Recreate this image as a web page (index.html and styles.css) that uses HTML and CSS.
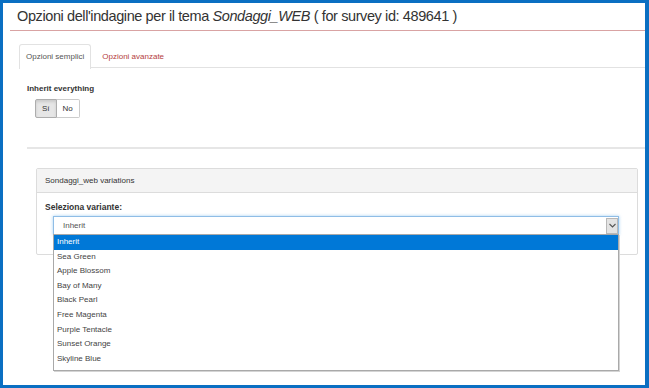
FILE: index.html
```html
<!DOCTYPE html>
<html lang="en">
<head>
    <meta charset="UTF-8">
    <title>Opzioni dell'indagine</title>
    <link rel="stylesheet" href="styles.css">
</head>
<body>
    <div class="frame">
        <div class="page-header">
            <h1>Opzioni dell'indagine per il tema <em>Sondaggi_WEB</em> ( for survey id: 489641 )</h1>
        </div>

        <div class="content">
            <ul class="nav-tabs">
                <li class="active"><a>Opzioni semplici</a></li>
                <li><a>Opzioni avanzate</a></li>
            </ul>

            <div class="inherit-group">
                <label class="control-label">Inherit everything</label>
                <div class="btn-group">
                    <span class="btn active">Sí</span>
                    <span class="btn">No</span>
                </div>
            </div>

            <hr class="divider">

            <div class="panel">
                <div class="panel-heading">Sondaggi_web variations</div>
                <div class="panel-body">
                    <label class="control-label">Seleziona variante:</label>
                    <div class="select-wrap">
                        <div class="select-box">
                            <span class="select-value">Inherit</span>
                            <span class="select-arrow">
                                <svg width="7" height="5" viewBox="0 0 7 5"><path d="M0.5 1 L3.5 4 L6.5 1" fill="none" stroke="#555" stroke-width="1.1"/></svg>
                            </span>
                        </div>
                        <ul class="select-list">
                            <li class="selected">Inherit</li>
                            <li>Sea Green</li>
                            <li>Apple Blossom</li>
                            <li>Bay of Many</li>
                            <li>Black Pearl</li>
                            <li>Free Magenta</li>
                            <li>Purple Tentacle</li>
                            <li>Sunset Orange</li>
                            <li>Skyline Blue</li>
                        </ul>
                    </div>
                </div>
            </div>
        </div>
    </div>
</body>
</html>
```

FILE: styles.css
```css
body {
    margin: 0;
    padding: 0;
    background: #ffffff;
    font-family: "Liberation Sans", Arial, sans-serif;
    color: #333;
}
.frame {
    width: 649px;
    height: 388px;
    box-sizing: border-box;
    border: 3px solid #0a6fc2;
    border-right-width: 4px;
    background: #fff;
    overflow: hidden;
}
.page-header {
    margin-left: 7px;
    height: 27px;
    border-bottom: 1px solid #d9a3a3;
}
.page-header h1 {
    margin: 0;
    padding: 4px 0 0 7px;
    font-size: 14.5px;
    letter-spacing: -0.4px;
    font-weight: normal;
    line-height: 18px;
    color: #333;
    white-space: nowrap;
}
.content {
    padding: 13px 0 0 16px;
}
.nav-tabs {
    list-style: none;
    margin: 0;
    padding: 0;
    display: flex;
    border-bottom: 1px solid #e2e2e2;
    height: 23px;
}
.nav-tabs li {
    margin-right: 4px;
}
.nav-tabs a {
    display: block;
    height: 23px;
    line-height: 23px;
    padding: 0 6px;
    font-size: 8px;
    color: #b5403e;
    border: 1px solid transparent;
    border-bottom: none;
    border-radius: 3px 3px 0 0;
}
.nav-tabs .active a {
    color: #555;
    background: #fff;
    border-color: #e2e2e2;
    height: 24px;
}
.control-label {
    display: block;
    font-size: 8px;
    font-weight: bold;
    color: #333;
}
.inherit-group {
    padding: 16px 0 0 8px;
}
.btn-group {
    display: flex;
    margin: 6px 0 0 8px;
}
.btn {
    display: block;
    height: 17px;
    line-height: 17px;
    font-size: 8px;
    color: #333;
    border: 1px solid #ccc;
    background: #fff;
    padding: 0 6px;
}
.btn:first-child {
    border-radius: 2px 0 0 2px;
}
.btn:last-child {
    border-left: none;
    border-radius: 0 2px 2px 0;
    padding: 0 6px 0 6px;
}
.btn.active {
    background: #e6e6e6;
    border-color: #adadad;
    box-shadow: inset 0 2px 3px rgba(0, 0, 0, 0.12);
}
.divider {
    margin: 29px 0 0 8px;
    border: none;
    border-top: 2px solid #e6e6e6;
}
.panel {
    margin: 19px 7px 0 17px;
    border: 1px solid #dcdcdc;
    border-radius: 2px;
    height: 85px;
}
.panel-heading {
    height: 23px;
    line-height: 23px;
    background: #f4f4f4;
    border-bottom: 1px solid #dcdcdc;
    padding-left: 8px;
    font-size: 8px;
    color: #333;
}
.panel-body {
    padding: 9px 18px 0 8px;
}
.panel-body .control-label {
    font-size: 8.5px;
}
.select-wrap {
    position: relative;
    margin: 4px 0 0 8px;
}
.select-box {
    display: flex;
    justify-content: space-between;
    align-items: center;
    height: 17px;
    border: 1px solid #8fbde6;
    box-shadow: 0 0 3px rgba(102, 175, 233, 0.6);
    background: #fff;
}
.select-value {
    padding-left: 9px;
    font-size: 8px;
    color: #555;
}
.select-arrow {
    display: flex;
    align-items: center;
    justify-content: center;
    width: 12px;
    height: 16px;
    background: #e3e3e3;
    border: 1px solid #b8b8b8;
    box-sizing: border-box;
}
.select-list {
    position: absolute;
    top: 18px;
    left: 0;
    right: 0;
    margin: 0;
    padding: 0 0 4px 0;
    list-style: none;
    background: #fff;
    border: 1px solid #a9a9a9;
    box-shadow: 1px 1px 0 #d4d4d4;
}
.select-list li {
    height: 14.6px;
    line-height: 14.6px;
    padding-left: 3px;
    font-size: 8px;
    color: #444;
}
.select-list li.selected {
    background: #0078d7;
    color: #fff;
}
```
